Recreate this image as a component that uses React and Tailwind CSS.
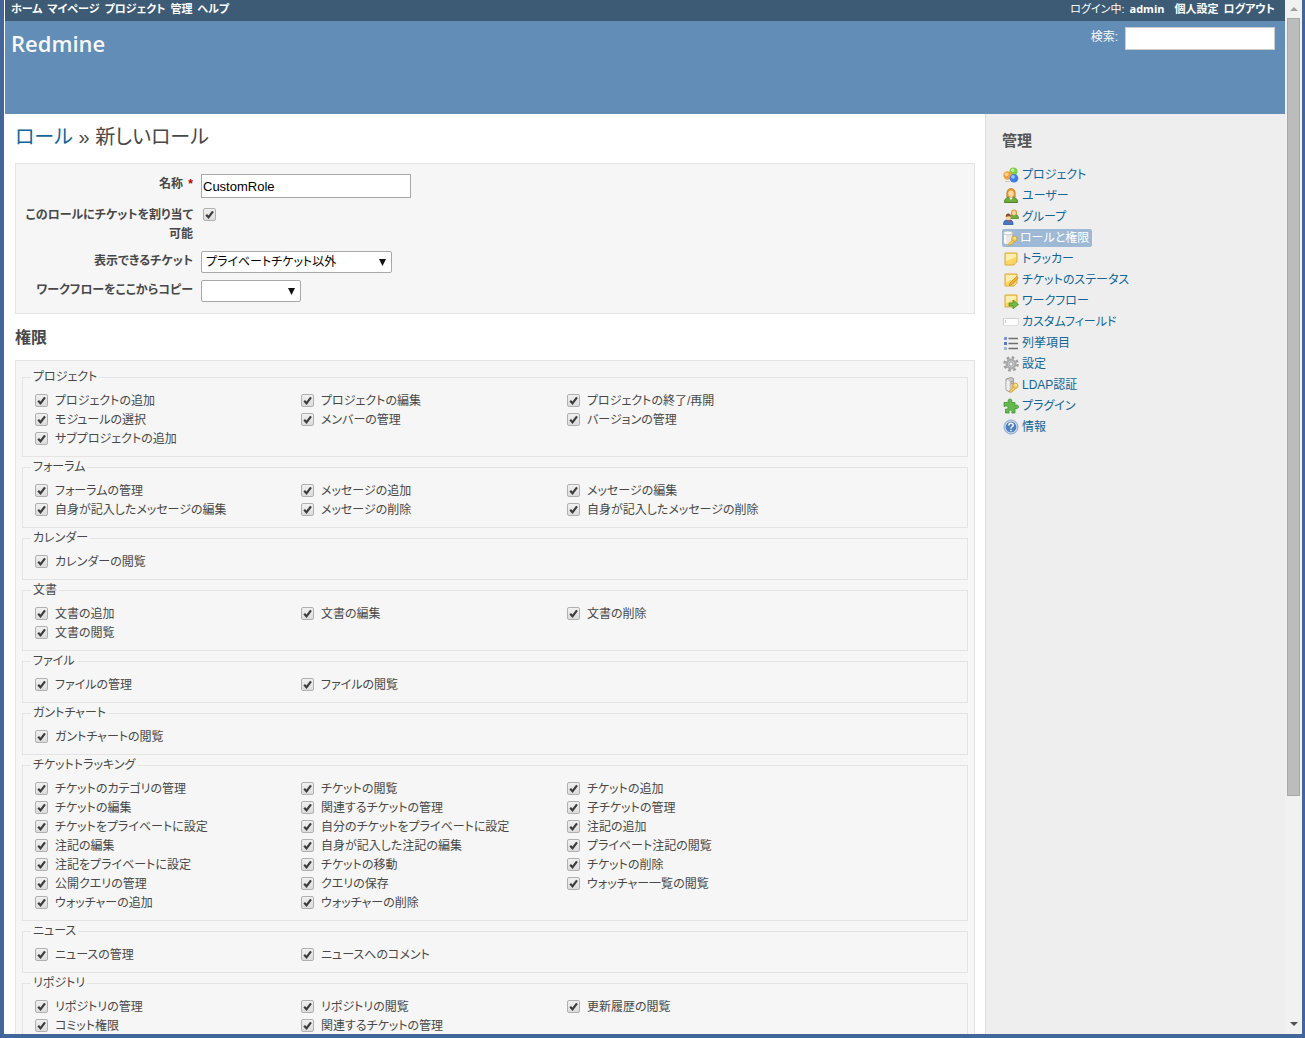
import { useId } from 'react';

const MENU = ['ホーム', 'マイページ', 'プロジェクト', '管理', 'ヘルプ'];

const GROUPS = [
  {
    name: 'プロジェクト',
    items: ['プロジェクトの追加', 'プロジェクトの編集', 'プロジェクトの終了/再開', 'モジュールの選択', 'メンバーの管理', 'バージョンの管理', 'サブプロジェクトの追加'],
  },
  {
    name: 'フォーラム',
    items: ['フォーラムの管理', 'メッセージの追加', 'メッセージの編集', '自身が記入したメッセージの編集', 'メッセージの削除', '自身が記入したメッセージの削除'],
  },
  { name: 'カレンダー', items: ['カレンダーの閲覧'] },
  { name: '文書', items: ['文書の追加', '文書の編集', '文書の削除', '文書の閲覧'] },
  { name: 'ファイル', items: ['ファイルの管理', 'ファイルの閲覧'] },
  { name: 'ガントチャート', items: ['ガントチャートの閲覧'] },
  {
    name: 'チケットトラッキング',
    items: [
      'チケットのカテゴリの管理', 'チケットの閲覧', 'チケットの追加',
      'チケットの編集', '関連するチケットの管理', '子チケットの管理',
      'チケットをプライベートに設定', '自分のチケットをプライベートに設定', '注記の追加',
      '注記の編集', '自身が記入した注記の編集', 'プライベート注記の閲覧',
      '注記をプライベートに設定', 'チケットの移動', 'チケットの削除',
      '公開クエリの管理', 'クエリの保存', 'ウォッチャー一覧の閲覧',
      'ウォッチャーの追加', 'ウォッチャーの削除',
    ],
  },
  { name: 'ニュース', items: ['ニュースの管理', 'ニュースへのコメント'] },
  {
    name: 'リポジトリ',
    items: ['リポジトリの管理', 'リポジトリの閲覧', '更新履歴の閲覧', 'コミット権限', '関連するチケットの管理'],
  },
];

function Note() {
  return (
    <>
      <path d="M2 2h12v9l-3 3H2z" fill="#fbd866" stroke="#e0a93c" />
      <path d="M3 3h10v3L3 10z" fill="#fdeeb0" />
      <path d="M14 11h-3v3z" fill="#fff3c4" stroke="#e0a93c" strokeWidth=".6" />
    </>
  );
}

function Key() {
  return (
    <>
      <circle cx="12.3" cy="8.8" r="2.7" fill="#f6cf5a" stroke="#cf9a2c" strokeWidth=".8" />
      <path d="M10.3 10.2l-4 3.8 1 1.3 1.6-.2.6-1.2 1.2-.3 1.7-2z" fill="#f6cf5a" stroke="#cf9a2c" strokeWidth=".8" />
      <circle cx="13" cy="8" r=".8" fill="#fff" />
    </>
  );
}

const ICONS = {
  projects: (
    <>
      <circle cx="10.5" cy="4.500" r="4" fill="#7fce4a" />
      <circle cx="9.8" cy="3.300" r="1.7" fill="#c4ee9c" />
      <circle cx="4.500" cy="8.500" r="4.200" fill="#f5a13c" />
      <circle cx="3.6" cy="7.300" r="1.9" fill="#fbd394" />
      <circle cx="11" cy="11.2" r="4.300" fill="#3f7de0" />
      <circle cx="10" cy="9.8" r="1.9" fill="#9cc3fa" />
      <path d="M2 14.5h5" stroke="#c9c9c9" />
    </>
  ),
  user: (
    <>
      <path d="M1.5 14.5c0-4 2.5-5.5 6.500-5.500s6.500 1.500 6.500 5.500z" fill="#6fae3c" stroke="#4a8226" />
      <path d="M6 9.200l2 2.800 2-2.800z" fill="#fff" />
      <path d="M3.800 9V5c0-3 1.800-4.500 4.200-4.500S12.200 2 12.200 5v4z" fill="#e59a2b" stroke="#b9731a" strokeWidth=".6" />
      <ellipse cx="8" cy="5.800" rx="2.700" ry="3.300" fill="#fcd9a6" />
    </>
  ),
  group: (
    <>
      <path d="M6.500 9.500c0-3 1.500-4 4.500-4s4.500 1 4.500 4z" fill="#6fae3c" stroke="#4a8226" strokeWidth=".7" />
      <path d="M8 6V3.500C8 1.500 9.200.5 11 .5s3 1 3 3V6z" fill="#e59a2b" />
      <ellipse cx="11" cy="4" rx="1.900" ry="2.400" fill="#fcd9a6" />
      <path d="M.5 15.500c0-3.500 1.500-4.800 4.800-4.800s4.800 1.300 4.800 4.800z" fill="#3f79c7" stroke="#25529a" strokeWidth=".7" />
      <ellipse cx="5.300" cy="8.300" rx="2.500" ry="3" fill="#fcd0a0" />
      <path d="M2.700 8c0-2.500 1-3.500 2.600-3.500S7.900 5.500 7.900 8C7 6.800 5 7.200 2.700 8z" fill="#8a4f2a" />
      <path d="M4.500 11l.8 3 .8-3z" fill="#e04b3a" />
    </>
  ),
  roles: (
    <>
      <path d="M1.500 3v9.500c0 1.200 2 2 4.500 2s4.500-.8 4.500-2V3z" fill="#e9e9e9" stroke="#b4b4b4" strokeWidth=".7" />
      <path d="M2 4v9l2 .8V5z" fill="#fff" />
      <ellipse cx="6" cy="3" rx="4.500" ry="1.900" fill="#fafafa" stroke="#b4b4b4" strokeWidth=".7" />
      <Key />
    </>
  ),
  tracker: <Note />,
  status: (
    <>
      <Note />
      <path d="M15.200 6l-6.500 6.800-2.200.7.500-2.300L13.500 4.500z" fill="#f3b63d" stroke="#b9802a" strokeWidth=".7" />
    </>
  ),
  workflow: (
    <>
      <Note />
      <path d="M6 10h4V7l5.500 4.500L10 15.800V13H6z" fill="#72bb45" stroke="#3f8a24" strokeWidth=".7" />
    </>
  ),
  fields: (
    <>
      <path d="M.5 4.500h15v7H.5z" fill="#fdfdfd" stroke="#e0e0e0" />
      <path d="M.5 11V4.500h15" fill="none" stroke="#cfcfcf" />
      <path d="M2.500 6v3" stroke="#aaa" strokeWidth=".6" />
    </>
  ),
  list: (
    <>
      <path d="M5.500 3.500H15M5.500 8.500H15M5.500 13.500H15" stroke="#6f6f6f" strokeWidth="1.300" />
      <path d="M1 2h3v3H1z" fill="#7f95d8" />
      <path d="M1 7h3v3H1z" fill="#5b77c9" />
      <path d="M1 12h3v3H1z" fill="#a4b7dc" />
    </>
  ),
  settings: (
    <>
      <circle cx="8" cy="8" r="6.500" fill="none" stroke="#9c9c9c" strokeWidth="2.400" strokeDasharray="2.550 2.550" />
      <circle cx="8" cy="8" r="4.300" fill="#cfcfcf" stroke="#aaaaaa" strokeWidth="2.200" />
      <circle cx="8" cy="8" r="2" fill="#f3f3f3" stroke="#8c8c8c" strokeWidth=".8" />
    </>
  ),
  ldap: (
    <>
      <path d="M3 2l5-1.500 2.500 1V13l-4 2L3 13z" fill="#c9c9c9" stroke="#8d8d8d" strokeWidth=".8" />
      <path d="M3.500 3l3 1v10l-3-1.300z" fill="#efefef" />
      <path d="M7.500 5l2-.6M7.500 7l2-.6" stroke="#777" strokeWidth=".8" />
      <Key />
    </>
  ),
  plugin: (
    <path
      d="M5.500 4.500C4.500 2.500 5.500 1 7 1s2.500 1.500 1.500 3.500H12v3c2-1 3.500-.2 3.500 1.300S14 11.300 12 10.300V15H8.700c.8-1.800.2-2.800-1.200-2.800s-2 1-1.200 2.800H2.500v-4C4 11.500 5 11 5 9.500S3.500 7.600 1 8.500v-4z"
      fill="#63b94e"
      stroke="#3f9430"
      strokeWidth=".8"
    />
  ),
  help: (
    <>
      <circle cx="8" cy="8" r="7" fill="#c3d3e8" stroke="#8fa9cb" />
      <circle cx="8" cy="8" r="5.300" fill="#4f7fbe" />
      <path d="M5.900 6.400c0-2.800 4.300-2.700 4.300-.2C10.200 7.800 8 7.700 8 9.400M8 10.800v1.500" fill="none" stroke="#fff" strokeWidth="1.500" />
    </>
  ),
};

const ADMIN_LINKS = [
  ['projects', 'プロジェクト'],
  ['user', 'ユーザー'],
  ['group', 'グループ'],
  ['roles', 'ロールと権限'],
  ['tracker', 'トラッカー'],
  ['status', 'チケットのステータス'],
  ['workflow', 'ワークフロー'],
  ['fields', 'カスタムフィールド'],
  ['list', '列挙項目'],
  ['settings', '設定'],
  ['ldap', 'LDAP認証'],
  ['plugin', 'プラグイン'],
  ['help', '情報'],
];

function Checkbox({ id }) {
  return (
    <span className="inline-grid size-[13px] shrink-0 place-items-center">
      <input
        id={id}
        type="checkbox"
        defaultChecked
        className="peer col-start-1 row-start-1 size-[13px] appearance-none rounded-xs border border-[#b0b0b0] bg-linear-to-b from-[#f0f0f0] to-[#dcdcdc]"
      />
      <svg viewBox="0 0 13 13" className="pointer-events-none invisible col-start-1 row-start-1 size-[13px] peer-checked:visible">
        <path d="M3.200 6.800l2.300 2.500L10 3.300" fill="none" stroke="#3c3c3c" strokeWidth="2.200" />
      </svg>
    </span>
  );
}

function Select({ id, options, className }) {
  return (
    <span className={`inline-grid items-center ${className}`}>
      <select
        id={id}
        className="col-start-1 row-start-1 h-[22px] w-full appearance-none rounded-xs border border-[#a9a9a9] bg-white pl-1 text-xs leading-5 text-black"
      >
        {options.map((o) => (
          <option key={o}>{o}</option>
        ))}
      </select>
      <svg viewBox="0 0 7 7" className="pointer-events-none col-start-1 row-start-1 mr-1.5 size-[7px] justify-self-end">
        <path d="M0 0h7L3.500 7z" fill="#111" />
      </svg>
    </span>
  );
}

function FieldRow({ id, label, required, children }) {
  return (
    <div className="flex items-start gap-2">
      <label htmlFor={id} className="w-[173px] shrink-0 pt-px text-right font-bold leading-[19px]">
        {label}
        {required && <span className="pl-0.5 text-[#bb0000]"> *</span>}
      </label>
      {children}
    </div>
  );
}

function PermissionGroup({ name, items }) {
  const base = useId();
  return (
    <fieldset className="mb-0.5 border border-[#e4e4e4] px-2 pb-2 pt-1.5">
      <legend className="px-0.5 leading-4">{name}</legend>
      <div className="grid grid-cols-[repeat(auto-fill,266px)] pl-1">
        {items.map((item, i) => (
          <label key={item} htmlFor={`${base}-${i}`} className="flex h-[19px] items-center gap-[7px] whitespace-nowrap">
            <Checkbox id={`${base}-${i}`} />
            {item}
          </label>
        ))}
      </div>
    </fieldset>
  );
}

function Sidebar() {
  return (
    <aside className="w-[300px] shrink-0 border-l border-[#dddddd] bg-[#eeeeee] pl-4 pt-[17px]">
      <h3 className="text-[15px] font-bold leading-5 text-[#555555]">管理</h3>
      <ul className="mt-[13px]">
        {ADMIN_LINKS.map(([icon, text]) => (
          <li key={icon} className="flex h-[21px] items-center">
            <a
              href={`#${icon}`}
              className={
                icon === 'roles'
                  ? 'flex h-[18px] items-center gap-0.5 rounded-xs bg-[#9db9d5] pr-[3px] text-white'
                  : 'flex h-[18px] items-center gap-[3px] pl-px text-[#116699]'
              }
            >
              <svg viewBox="0 0 16 16" className="size-4">
                {ICONS[icon]}
              </svg>
              {text}
            </a>
          </li>
        ))}
      </ul>
    </aside>
  );
}

function Scrollbar() {
  return (
    <div aria-hidden="true" className="flex w-[17px] shrink-0 flex-col items-center bg-[#f1f1f1] pl-px">
      <svg viewBox="0 0 16 18" className="h-[18px] w-4 shrink-0">
        <path d="M4 11l4-4 4 4z" fill="#a0a0a0" />
      </svg>
      <div className="min-h-0 flex-1 self-stretch">
        <div className="ml-px h-[78%] w-[13px] border border-[#a8a8a8] bg-[#bcbcbc]" />
      </div>
      <svg viewBox="0 0 16 18" className="h-[18px] w-4 shrink-0">
        <path d="M4 6l4 4 4-4z" fill="#505050" />
      </svg>
    </div>
  );
}

export default function App() {
  return (
    <div className="flex h-screen overflow-hidden border-b-4 border-l-4 border-r-[3px] border-[#42659b] bg-white pl-px font-['Liberation_Sans','Noto_Sans_CJK_JP',sans-serif] text-xs text-[#484848] [font-feature-settings:'palt']">
      <div className="flex min-w-0 flex-1 flex-col overflow-hidden">
        <nav className="flex h-[21px] shrink-0 items-center justify-between bg-[#3e5b76] px-[6px] pb-0.5 text-[11px] text-white">
          <ul className="flex gap-[5px] font-bold">
            {MENU.map((m) => (
              <li key={m}>
                <a href="#menu">{m}</a>
              </li>
            ))}
          </ul>
          <div className="flex items-center pr-1">
            <span>ログイン中:</span>
            <a href="#admin" className="ml-[5px] font-['Open_Sans',sans-serif] font-bold">admin</a>
            <a href="#account" className="ml-2.5 font-bold">個人設定</a>
            <a href="#logout" className="ml-[5px] font-bold">ログアウト</a>
          </div>
        </nav>

        <header className="flex h-[93px] shrink-0 items-start justify-between bg-[#628db6] pl-[6px] pr-2.5 pt-1.5 text-[#f8f8f8]">
          <h1 className="font-['Open_Sans',sans-serif] text-[22px] font-semibold leading-8">Redmine</h1>
          <form className="flex items-start gap-[7px]">
            <label htmlFor="q" className="leading-5">検索:</label>
            <input id="q" type="text" className="h-[23px] w-[150px] border border-[#cccccc] bg-white px-1 text-black" />
          </form>
        </header>

        <div className="flex min-h-0 flex-1">
          <main className="min-w-0 flex-1 px-2.5 pt-[9px]">
            <h2 className="text-xl leading-7">
              <a href="#roles" className="text-[#116699]">ロール</a> » 新しいロール
            </h2>

            <div className="mt-3 flex flex-col gap-[7px] border border-[#e4e4e4] bg-[#f6f6f6] pb-[11px] pl-1 pt-2.5">
              <FieldRow id="role-name" label="名称" required>
                <input
                  id="role-name"
                  type="text"
                  defaultValue="CustomRole"
                  className="h-6 w-[210px] border border-[#a9a9a9] bg-white px-px text-[13px] text-black"
                />
              </FieldRow>
              <FieldRow id="role-assignable" label="このロールにチケットを割り当て可能">
                <span className="flex h-[19px] items-center pl-0.5">
                  <Checkbox id="role-assignable" />
                </span>
              </FieldRow>
              <FieldRow id="role-visibility" label="表示できるチケット">
                <Select id="role-visibility" options={['プライベートチケット以外']} className="w-[191px]" />
              </FieldRow>
              <FieldRow id="role-copy" label="ワークフローをここからコピー">
                <Select id="role-copy" options={['']} className="w-[100px]" />
              </FieldRow>
            </div>

            <h3 className="mt-3 text-base font-bold leading-6">権限</h3>

            <div className="mt-2.5 border border-[#e4e4e4] bg-[#f6f6f6] px-1.5 pt-2">
              {GROUPS.map((g) => (
                <PermissionGroup key={g.name} {...g} />
              ))}
            </div>
          </main>
          <Sidebar />
        </div>
      </div>
      <Scrollbar />
    </div>
  );
}
